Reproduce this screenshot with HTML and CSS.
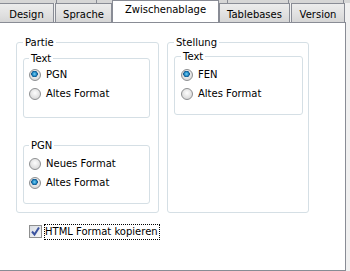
FILE: index.html
```html
<!DOCTYPE html>
<html lang="de">
<head>
  <meta charset="UTF-8">
  <title>Optionen - Zwischenablage</title>
  <link rel="stylesheet" href="styles.css">
</head>
<body>

  <div class="strip">
    <span class="stub s1"></span>
    <span class="stub s2"></span>
    <span class="stub s3"></span>
    <span class="stub s4"></span>
    <span class="stub s5"></span>
  </div>

  <div class="tabs">
    <div class="tab t-design">Design</div>
    <div class="tab t-sprache">Sprache</div>
    <div class="tab active t-clip">Zwischenablage</div>
    <div class="tab t-tb">Tablebases</div>
    <div class="tab t-version">Version</div>
  </div>

  <div class="panel">
    <div class="groups">

      <div class="group partie">
        <div class="title t-outer">Partie</div>
        <div class="group sub sub-text">
          <div class="title t-flat">Text</div>
          <label class="row"><span class="radio checked"></span>PGN</label>
          <label class="row"><span class="radio"></span>Altes Format</label>
        </div>
        <div class="group sub sub-pgn">
          <div class="title">PGN</div>
          <label class="row"><span class="radio"></span>Neues Format</label>
          <label class="row"><span class="radio checked"></span>Altes Format</label>
        </div>
      </div>

      <div class="group stellung">
        <div class="title">Stellung</div>
        <div class="group sub sub-fen">
          <div class="title">Text</div>
          <label class="row"><span class="radio checked"></span>FEN</label>
          <label class="row"><span class="radio"></span>Altes Format</label>
        </div>
      </div>

    </div>

    <label class="row check-row">
      <span class="checkbox">
        <svg width="11" height="11" viewBox="0 0 11 11">
          <path d="M2 5.5 L4.5 8.5 L9 1.5" fill="none" stroke="#3c54a0" stroke-width="2"/>
        </svg>
      </span>
      <span class="focus">HTML Format kopieren</span>
    </label>
  </div>

</body>
</html>
```

FILE: styles.css
```css
body {
  margin: 0;
  background: #f0f0f0;
  font-family: "DejaVu Sans", Tahoma, sans-serif;
  font-size: 10px;
  color: #000;
  overflow: hidden;
}

/* upper tab row, only its bottom edge shows */
.strip {
  display: flex;
  height: 3px;
  background: #d6d6d6;
}
.stub {
  height: 3px;
  border-right: 1px solid #898c95;
}
.s1 { width: 56px; }
.s2 { width: 39px; }
.s3 { width: 130px; }
.s4 { width: 60px; }
.s5 { width: 54px; }

.tabs {
  display: flex;
  align-items: flex-end;
  height: 19px;
  margin-left: -1px;
}
.tab {
  box-sizing: border-box;
  height: 19px;
  padding-top: 4px;
  text-align: center;
  border: 1px solid #898c95;
  border-bottom: none;
  background: linear-gradient(#ececec, #e2e2e2 50%, #d6d6d6);
  line-height: 13px;
  margin-right: 1px;
}
.tab.active {
  position: relative;
  z-index: 1;
  height: 22px;
  margin-top: -3px;
  padding-top: 2px;
  background: #fff;
  margin-right: 0;
  margin-left: -1px;
}
.t-design { width: 55px; }
.t-sprache { width: 57px; }
.t-clip { width: 107px; }
.t-tb { width: 71px; }
.t-version { width: 54px; }

.panel {
  box-sizing: border-box;
  width: 347px;
  height: 249px;
  margin-left: -1px;
  padding: 19px 0 0 16px;
  background: #fff;
  border: 1px solid #898c95;
}

.groups {
  display: flex;
  gap: 8px;
}

.group {
  box-sizing: border-box;
  border: 1px solid #d5dfe5;
  border-radius: 3px;
}
.title {
  width: fit-content;
  margin: -7px 0 2px 0;
  padding: 0 2px;
  line-height: 13px;
  background: #fff;
}
.title.t-outer { margin-bottom: 9px; }
.title.t-flat { margin-bottom: 0; }
.stellung > .title { margin-bottom: 7px; }

.partie {
  width: 143px;
  height: 171px;
  padding-left: 6px;
}
.stellung {
  width: 142px;
  height: 171px;
  padding-left: 6px;
}
.sub {
  width: 127px;
  padding-left: 5px;
}
.sub-text {
  height: 60px;
}
.sub-pgn {
  height: 59px;
  margin-top: 27px;
}
.sub-fen {
  width: 129px;
  height: 59px;
  padding-left: 6px;
}

.row {
  display: flex;
  align-items: center;
  gap: 5px;
  height: 19px;
}

.radio {
  box-sizing: border-box;
  width: 12px;
  height: 12px;
  border-radius: 50%;
  border: 1px solid #8d8f91;
  background: radial-gradient(circle at 50% 40%, #fdfdfd, #dcdcdc 70%, #c8c8c8);
}
.radio.checked {
  background:
    radial-gradient(circle at 45% 40%, #7fd0f2 0, #1f8bc6 2px, #0f4f86 3px, transparent 3.5px),
    radial-gradient(circle at 50% 40%, #fdfdfd, #dcdcdc 70%, #c8c8c8);
}

.check-row {
  margin: 9px 0 0 13px;
  gap: 3px;
}
.checkbox {
  box-sizing: border-box;
  display: flex;
  align-items: center;
  justify-content: center;
  width: 13px;
  height: 13px;
  border: 1px solid #8e8f8f;
  background: linear-gradient(135deg, #d9dde3, #f6f7f9);
}
.focus {
  padding: 1px 1px 1px 0;
  line-height: 12px;
  outline: 1px dotted #000;
}
```
